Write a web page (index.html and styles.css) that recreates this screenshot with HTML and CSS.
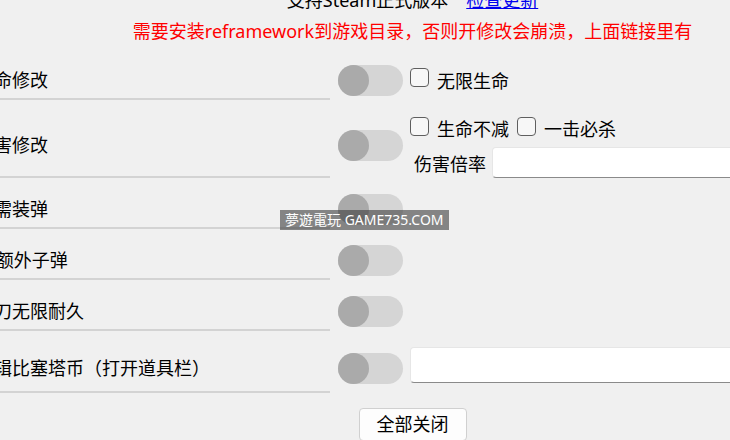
FILE: index.html
```html
<!DOCTYPE html>
<html lang="zh-CN">
<head>
<meta charset="utf-8">
<title>修改器</title>
<link rel="stylesheet" href="styles.css">
</head>
<body>
<div class="page">
  <div class="header-line">支持Steam正式版本<a class="link" href="#">检查更新</a></div>
  <div class="header-line red">需要安装reframework到游戏目录，否则开修改会崩溃，上面链接里有</div>

  <div class="mods">
    <div class="label">生命修改</div>
    <div class="toggle"><span class="knob"></span></div>
    <div class="opts">
      <label class="check"><input type="checkbox" class="box">无限生命</label>
    </div>

    <div class="label">伤害修改</div>
    <div class="toggle"><span class="knob"></span></div>
    <div class="opts opts-top">
      <div class="checkline">
        <label class="check"><input type="checkbox" class="box">生命不减</label>
        <label class="check"><input type="checkbox" class="box">一击必杀</label>
      </div>
      <div class="ratio">伤害倍率<input type="text" class="field field-ratio"></div>
    </div>

    <div class="label">无需装弹</div>
    <div class="toggle"><span class="knob"></span></div>
    <div class="opts"></div>

    <div class="label">x2额外子弹</div>
    <div class="toggle"><span class="knob"></span></div>
    <div class="opts"></div>

    <div class="label">小刀无限耐久</div>
    <div class="toggle"><span class="knob"></span></div>
    <div class="opts"></div>

    <div class="label">编辑比塞塔币（打开道具栏）</div>
    <div class="toggle"><span class="knob"></span></div>
    <div class="opts opts-top">
      <input type="text" class="field field-coins">
    </div>
  </div>

  <div class="actions"><button class="btn" type="button">全部关闭</button></div>
</div>
<div class="watermark">夢遊電玩 GAME735.COM</div>
</body>
</html>
```

FILE: styles.css
```css
html, body {
  margin: 0;
  padding: 0;
  background: #f0f0f0;
  overflow: hidden;
  height: 440px;
}

body {
  font-family: "Noto Sans", "Noto Sans CJK SC", sans-serif;
  font-size: 18px;
  color: #000;
  position: relative;
}

.page {
  width: 873px;
  margin: -13px 0 0 -24px;
}

.header-line {
  line-height: 26px;
  text-align: center;
  white-space: nowrap;
}

.red {
  color: #ff0000;
  margin-top: 5px;
}

.link {
  color: #0000ee;
  text-decoration: underline;
  margin-left: 18px;
}

.mods {
  display: grid;
  grid-template-columns: 354px 73px 1fr;
  row-gap: 16px;
  margin-top: 21px;
}

.label {
  box-sizing: border-box;
  display: flex;
  align-items: center;
  min-height: 35px;
  padding-bottom: 3px;
  border-bottom: 2px solid #d3d3d3;
  line-height: 24px;
  white-space: nowrap;
}

.toggle {
  justify-self: end;
  align-self: center;
  margin-bottom: 4px;
  width: 65px;
  height: 31px;
  border-radius: 16px;
  background: #d5d5d5;
}

.knob {
  display: block;
  width: 31px;
  height: 31px;
  border-radius: 50%;
  background: #aaaaaa;
}

.opts {
  margin-left: 7px;
  align-self: center;
  margin-bottom: 4px;
  display: flex;
  flex-direction: column;
}

.opts-top {
  align-self: start;
  margin-bottom: 0;
}

.checkline {
  display: flex;
  gap: 8px;
}

.check {
  display: flex;
  align-items: center;
  gap: 8px;
  height: 26px;
  line-height: 26px;
  white-space: nowrap;
}

.box {
  appearance: none;
  -webkit-appearance: none;
  margin: 0 0 6px 0;
  width: 19px;
  height: 19px;
  box-sizing: border-box;
  border: 1px solid #5f5f5f;
  border-radius: 4px;
  background: #f7f7f7;
}

.ratio {
  display: flex;
  align-items: center;
  gap: 6px;
  margin-top: 5px;
  padding-left: 4px;
  white-space: nowrap;
}

.field {
  box-sizing: border-box;
  margin: 0;
  padding: 0 8px;
  background: #ffffff;
  border: 1px solid #e6e6e6;
  border-bottom: 1px solid #8a8a8a;
  border-radius: 4px;
  font: inherit;
}

.field-ratio {
  width: 300px;
  height: 31px;
}

.field-coins {
  width: 330px;
  height: 36px;
  margin-bottom: 10px;
}

.actions {
  text-align: center;
  margin-top: 15px;
}

.btn {
  font: inherit;
  font-size: 18px;
  height: 33px;
  padding: 0 17px;
  background: #fdfdfd;
  color: #000;
  border: 1px solid #d0d0d0;
  border-radius: 4px;
  line-height: 31px;
}

.watermark {
  position: absolute;
  left: 280px;
  top: 210px;
  height: 20px;
  line-height: 20px;
  padding: 0 5px;
  font-family: "Noto Sans", "Noto Sans CJK TC", sans-serif;
  font-size: 14px;
  color: #ffffff;
  background: rgba(60, 60, 60, 0.6);
  white-space: nowrap;
}
```
